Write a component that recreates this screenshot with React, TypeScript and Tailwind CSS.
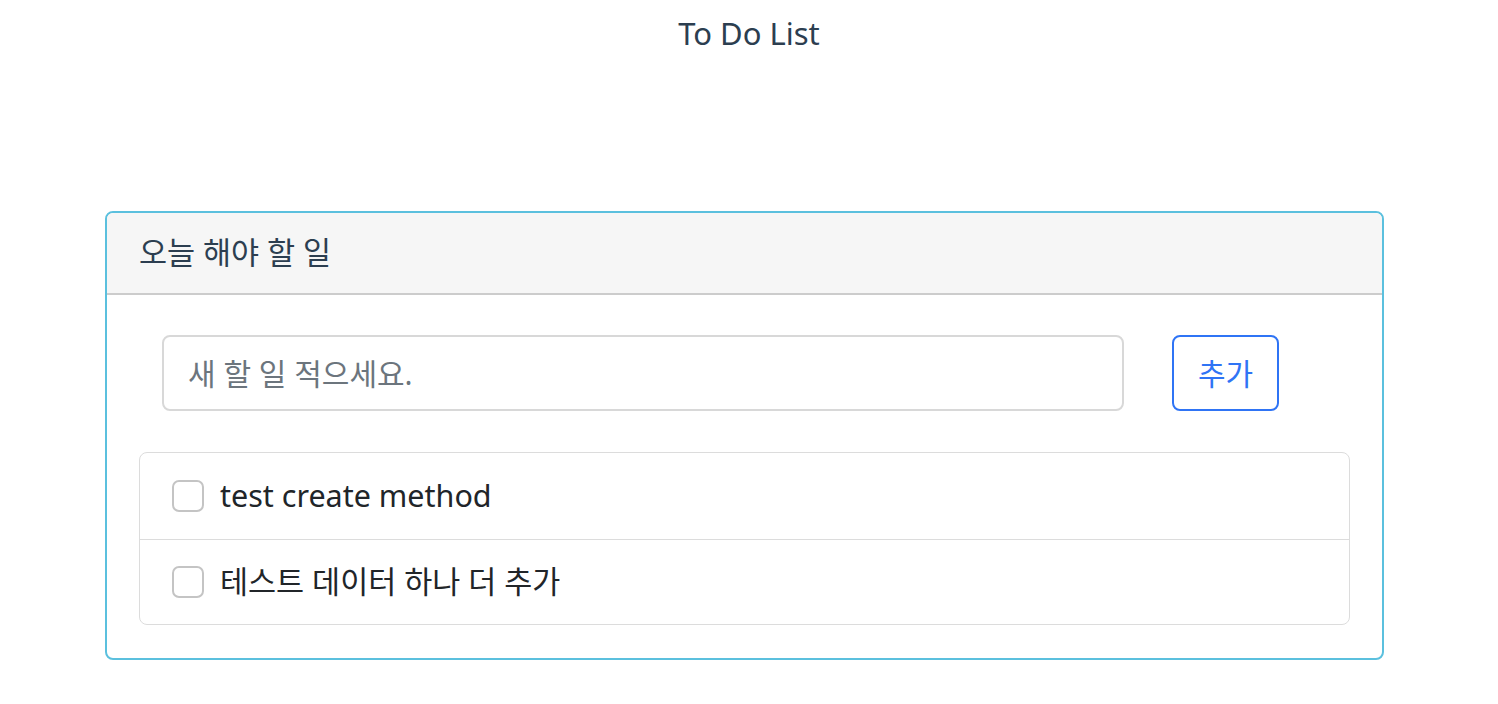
export default function App() {
  const font = { fontFamily: '"Noto Sans", "Noto Sans CJK KR", sans-serif' };
  const items = ["test create method", "테스트 데이터 하나 더 추가"];
  return (
    <div className="w-[1498px] min-h-[704px] bg-white text-[#2c3e50]" style={font}>
      <h1 className="pt-[13px] text-center text-[31px] leading-[40px] font-normal text-[#2c3e50]">To Do List</h1>
      <div className="mx-[105px] mt-[158px] w-[1279px] rounded-[8px] border-2 border-[#5bc0de] overflow-hidden">
        <div className="h-[82px] bg-[#f6f6f6] border-b-2 border-[#cccccc] flex items-center px-[32px] text-[30.5px] text-[#2c3e50]">
          오늘 해야 할 일
        </div>
        <div className="px-[32px] pt-[40px] pb-[33px]">
          <div className="flex items-center pl-[23px]">
            <div className="w-[962px] h-[76px] rounded-[8px] border-2 border-[#d8d8d8] flex items-center px-[24px] text-[30px] text-[#6c757d]">
              새 할 일 적으세요.
            </div>
            <div className="ml-[48px] w-[107px] h-[76px] rounded-[8px] border-2 border-[#2f74f5] flex items-center justify-center text-[30px] text-[#2f74f5]">
              추가
            </div>
          </div>
          <div className="mt-[41px] rounded-[8px] border-[1.5px] border-[#dcdcdc]">
            {items.map((t, i) => (
              <div
                key={i}
                className={`h-[85.5px] flex items-center px-[32px] gap-[16px] text-[30.5px] text-[#212529] ${i > 0 ? "border-t-[1.5px] border-[#dcdcdc]" : ""}`}
              >
                <span className="w-[32px] h-[32px] rounded-[7px] border-2 border-[#c4c4c4] bg-white shrink-0" />
                <span>{t}</span>
              </div>
            ))}
          </div>
        </div>
      </div>
    </div>
  );
}
